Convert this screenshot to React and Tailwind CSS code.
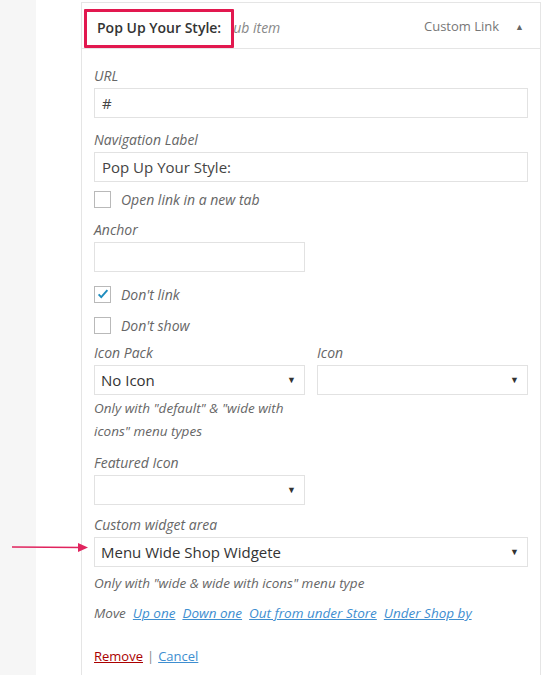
const font = { fontFamily: '"Open Sans", "Noto Sans", sans-serif' }

function Label({ children }) {
  return <div className="text-[14px] italic text-[#666] leading-[18px] mb-[3px]">{children}</div>
}

function TextInput({ value, className = '' }) {
  return (
    <div className={`h-[30px] border border-[#e2e2e2] bg-white px-[7px] flex items-center text-[15px] text-[#444] ${className}`}>
      {value}
    </div>
  )
}

function Select({ value, className = '' }) {
  return (
    <div className={`h-[30px] border border-[#e2e2e2] bg-white pl-[6px] pr-[8px] flex items-center justify-between text-[15px] text-[#333] ${className}`}>
      <span>{value}</span>
      <span className="text-[9px] text-[#333]">▼</span>
    </div>
  )
}

function Check({ checked, label }) {
  return (
    <div className="flex items-center gap-[10px] h-[20px]">
      <div className="w-[17px] h-[17px] border border-[#b9b9b9] bg-white flex items-center justify-center">
        {checked && (
          <svg viewBox="0 0 16 16" className="w-[14px] h-[14px]">
            <path d="M3 8.5l3 3 7-8" fill="none" stroke="#1e8cbe" strokeWidth="2.2" />
          </svg>
        )}
      </div>
      <span className="text-[14px] italic text-[#666]">{label}</span>
    </div>
  )
}

export default function App() {
  return (
    <div className="w-[542px] h-[675px] flex bg-white overflow-hidden" style={font}>
      <div className="w-[36px] bg-[#f6f6f6] shrink-0" />
      <div className="w-[45px] shrink-0 relative">
        {/* pointer to the widget area select */}
        <svg className="absolute left-[-24px] top-[538px]" width="80" height="18" viewBox="0 0 80 18">
          <line x1="0" y1="9" x2="70" y2="9.5" stroke="#e0245e" strokeWidth="1.5" />
          <path d="M66 5l10 4.5-10 4.5z" fill="#e0245e" />
        </svg>
      </div>
      <div className="w-[460px] mt-[2px] border-l border-r border-t border-[#e5e5e5] flex flex-col">
        <div className="h-[46px] pt-[3px] border-b border-[#e5e5e5] flex items-center relative">
          <div className="absolute left-[2px] top-[6px] w-[150px] h-[39px] border-[3px] border-[#e2184f] rounded-[1px]" />
          <span className="ml-[15px] text-[14px] font-semibold text-[#333]">Pop Up Your Style:</span>
          <span className="ml-[12px] text-[14px] italic text-[#888]">ub item</span>
          <span className="ml-auto text-[13px] text-[#777]">Custom Link</span>
          <span className="ml-[16px] mr-[16px] text-[9px] text-[#666]">▲</span>
        </div>
        <div className="pl-[12px] pr-[12px] pt-[18px] flex flex-col">
          <Label>URL</Label>
          <TextInput value="#" className="w-[434px]" />
          <div className="mt-[13px]"><Label>Navigation Label</Label></div>
          <TextInput value="Pop Up Your Style:" className="w-[434px]" />
          <div className="mt-[7px]"><Check label="Open link in a new tab" /></div>
          <div className="mt-[12px]"><Label>Anchor</Label></div>
          <TextInput value="" className="w-[211px]" />
          <div className="mt-[12px]"><Check checked label="Don't link" /></div>
          <div className="mt-[11px]"><Check label="Don't show" /></div>
          <div className="mt-[9px] flex gap-[12px]">
            <div className="w-[211px]">
              <Label>Icon Pack</Label>
              <Select value="No Icon" />
              <div className="mt-[2px] text-[13.5px] italic text-[#666] leading-[23px]">
                Only with "default" &amp; "wide with icons" menu types
              </div>
            </div>
            <div className="w-[211px]">
              <Label>Icon</Label>
              <Select value="" />
            </div>
          </div>
          <div className="mt-[11px]"><Label>Featured Icon</Label></div>
          <Select value="" className="w-[211px]" />
          <div className="mt-[11px]"><Label>Custom widget area</Label></div>
          <Select value="Menu Wide Shop Widgete" className="w-[434px]" />
          <div className="mt-[6px] text-[13.5px] italic text-[#666]">Only with "wide &amp; wide with icons" menu type</div>
          <div className="mt-[10px] flex gap-[7px] text-[13.5px] italic">
            <span className="text-[#666]">Move</span>
            <span className="text-[#3e8ed0] underline">Up one</span>
            <span className="text-[#3e8ed0] underline">Down one</span>
            <span className="text-[#3e8ed0] underline">Out from under Store</span>
            <span className="text-[#3e8ed0] underline">Under Shop by</span>
          </div>
          <div className="mt-[23px] text-[13px] flex gap-[4px]">
            <span className="text-[#a00] underline">Remove</span>
            <span className="text-[#888]">|</span>
            <span className="text-[#3e8ed0] underline">Cancel</span>
          </div>
        </div>
      </div>
    </div>
  )
}
